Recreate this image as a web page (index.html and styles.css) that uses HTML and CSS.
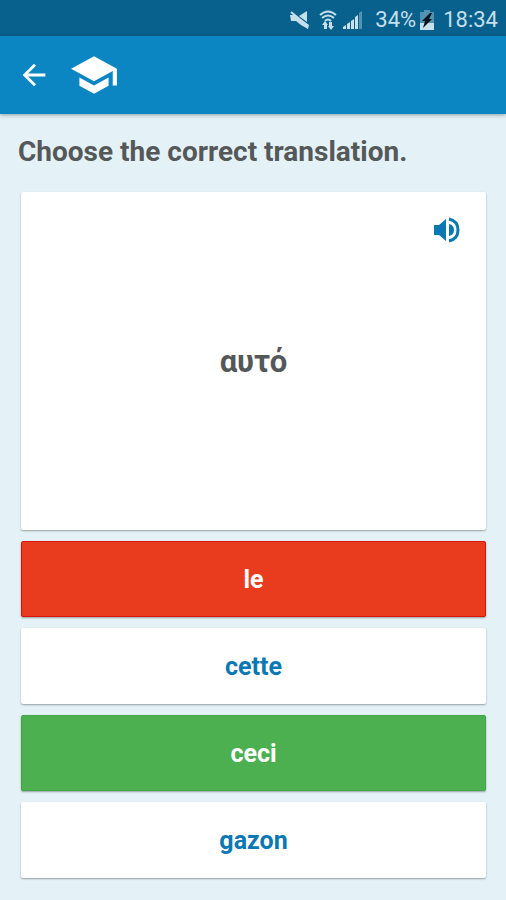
FILE: index.html
```html
<!DOCTYPE html>
<html lang="en">
<head>
<meta charset="utf-8">
<meta name="viewport" content="width=device-width, initial-scale=1">
<title>Choose the correct translation</title>
<link rel="stylesheet" href="styles.css">
</head>
<body>
<div class="status">
  <svg class="status-mute" viewBox="0 0 20 20" aria-hidden="true">
    <path d="M0 5h5l14 10-1 4-7-4-5-4H1zM9 6l8-5v11z"/>
    <path class="line" d="M1 2l17 14"/>
  </svg>
  <svg class="status-wifi" viewBox="0 0 18 20" aria-hidden="true">
    <path class="line" d="M1 5q8-7 16 0M3 8q6-5 12 0M6 11q3-3 6 0"/>
    <path d="M6 11l3 4H8v4H5v-4H3zM12 20l-3-4h1v-4h3v4h2z"/>
  </svg>
  <svg class="status-signal" viewBox="0 0 20 20" aria-hidden="true">
    <path d="M0 17l3-2v4H0zM4 14l3-2v7H4zM8 11l3-2v10H8zM12 7l3-2v14h-3z"/>
    <path class="faint" d="M16 3l3-2v18h-3z"/>
  </svg>
  <span class="battery-text">34%</span>
  <svg class="status-battery" viewBox="0 0 14 20" aria-hidden="true">
    <path class="faint" d="M4 0h6v2h4v12H0V2h4z"/>
    <path d="M0 13h14v7H0z"/>
    <path class="bolt" d="M10 3l-8 8h3l-2 7 9-9H9l3-6z"/>
  </svg>
  <time>18:34</time>
</div>
<header class="appbar">
  <button class="icon-button" type="button" aria-label="Back">
    <svg class="icon-back" viewBox="0 0 24 24"><path d="M20 11H7.830l5.590-5.590L12 4l-8 8 8 8 1.410-1.410L7.830 13H20v-2z"/></svg>
  </button>
  <svg class="icon-school" viewBox="0 0 24 24" aria-hidden="true"><path d="M5 13.180v4L12 21l7-3.820v-4L12 17l-7-3.820zM12 3L1 9l11 6 9-4.910V17h2V9L12 3z"/></svg>
</header>
<main class="quiz">
  <h1 class="prompt">Choose the correct translation.</h1>
  <section class="card">
    <button class="icon-button speak" type="button" aria-label="Listen">
      <svg viewBox="0 0 26 26"><path d="M0 8h5l7-6v22l-7-6H0zM15 7q5 1 5 6t-5 6z"/><path class="wave" d="M15 2q9 2 9 11t-9 11"/></svg>
    </button>
    <p class="word" lang="el">αυτό</p>
  </section>
  <button class="answer wrong" type="button">le</button>
  <button class="answer" type="button">cette</button>
  <button class="answer right" type="button">ceci</button>
  <button class="answer" type="button">gazon</button>
</main>
</body>
</html>
```
FILE: styles.css
```css
* {
  box-sizing: border-box;
}

body {
  margin: 0;
  min-height: 100vh;
  display: flex;
  flex-direction: column;
  background: #e4f2f8;
  color: #555859;
  font-family: Roboto, "Liberation Sans", sans-serif;
}

.status {
  display: flex;
  align-items: center;
  justify-content: flex-end;
  height: 36px;
  padding: 3px 8px 0 0;
  background: #08618c;
  color: #c5dfeb;
  font-size: 22px;
  line-height: 32px;
}

.status svg {
  height: 20px;
  fill: #c5dfeb;
}

.status .line {
  fill: none;
  stroke: #c5dfeb;
  stroke-width: 2;
}

.status .faint {
  opacity: 0.4;
}

.status .bolt {
  fill: #06151d;
}

.status-mute {
  width: 20px;
  margin-right: 9px;
}

.status-wifi {
  width: 18px;
  margin-right: 6px;
}

.status-signal {
  width: 20px;
  margin-right: 12px;
}

.status-battery {
  width: 14px;
  margin: 0 9px 0 4px;
}

.appbar {
  display: flex;
  align-items: center;
  height: 78px;
  padding: 0 17px;
  gap: 18px;
  background: #0b86c2;
  box-shadow: 0 1px 4px rgba(0, 0, 0, 0.35);
}

.icon-button {
  display: flex;
  padding: 0;
  border: 0;
  background: none;
}

.icon-back {
  width: 34px;
  height: 34px;
  fill: #fff;
}

.icon-school {
  width: 50px;
  height: 50px;
  fill: #fff;
}

.quiz {
  flex: 1;
  display: flex;
  flex-direction: column;
  gap: 11px;
  padding: 21px 20px 22px 21px;
}

.prompt {
  margin: 0 0 12px -3px;
  font-size: 28px;
  line-height: 34px;
  font-weight: 700;
}

.card,
.answer {
  border: 0;
  border-radius: 2px;
  background: #fff;
  box-shadow: 0 1px 2px rgba(0, 0, 0, 0.35);
}

.card {
  position: relative;
  flex: 1;
  display: flex;
  align-items: center;
  justify-content: center;
  min-height: 160px;
}

.speak {
  position: absolute;
  top: 25px;
  right: 26px;
}

.speak svg {
  width: 26px;
  height: 26px;
  fill: #0b78b4;
}

.speak .wave {
  fill: none;
  stroke: #0b78b4;
  stroke-width: 3;
}

.word {
  margin: 0;
  padding-top: 2px;
  font-size: 31px;
  line-height: 36px;
  font-weight: 700;
}

.answer {
  height: 76px;
  padding: 2px 0 0;
  color: #0b78b4;
  font: 700 25px/30px Roboto, "Liberation Sans", sans-serif;
}

.wrong {
  border: 1px solid #dc1408;
  background: #e93c1f;
  color: #fff;
}

.right {
  border: 1px solid #3fa845;
  background: #4caf50;
  color: #fff;
}
```
